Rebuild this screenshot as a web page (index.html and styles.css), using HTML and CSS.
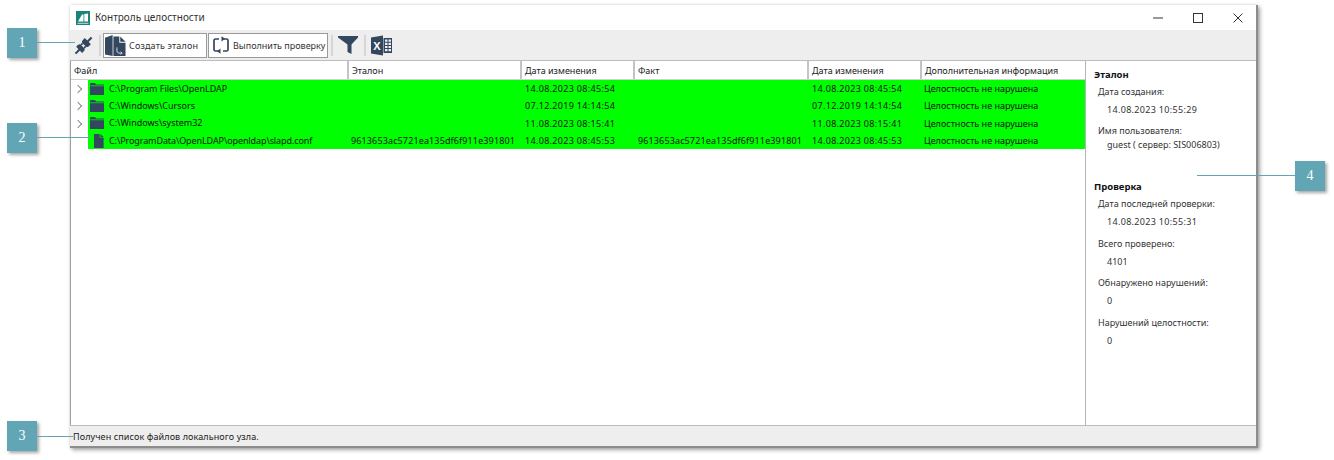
FILE: index.html
```html
<!DOCTYPE html>
<html lang="ru">
<head>
<meta charset="utf-8">
<title>Контроль целостности</title>
<link rel="stylesheet" href="styles.css">
</head>
<body>
<svg class="defs" width="0" height="0" aria-hidden="true">
  <symbol id="folder" viewBox="0 0 14 12"><path d="M0 1.2C0 .5.5 0 1.2 0h3.600l1.400 1.600H14V2.600H0z" fill="#33475f"/><path d="M0 3.200h14V12H0z" fill="#33475f"/></symbol>
  <symbol id="file" viewBox="0 0 11 14"><path d="M1 0h5.600v3.600H10.600V14H1z" fill="#33475f"/><path d="M7.400 0l3.200 3H7.400z" fill="#33475f"/></symbol>
</svg>
<main class="window">
  <header class="titlebar">
    <svg class="app-icon" viewBox="0 0 14 14"><rect width="14" height="14" fill="#1b8378"/><path d="M2 10.500L6 3.500h1.500v7zM8.300 10.500V3l3.700-.5v8z" fill="#fff"/><rect x="1.500" y="11.800" width="11" height="1" fill="#bfe0dc"/></svg>
    <span class="title">Контроль целостности</span>
    <div class="win-controls">
      <svg viewBox="0 0 10 10" class="win-btn"><path d="M0 5h10" stroke="#333" fill="none"/></svg>
      <svg viewBox="0 0 10 10" class="win-btn"><rect x=".5" y=".5" width="9" height="9" stroke="#333" fill="none"/></svg>
      <svg viewBox="0 0 10 10" class="win-btn"><path d="M.5.5l9 9M9.500.5l-9 9" stroke="#333" fill="none"/></svg>
    </div>
  </header>
  <div class="toolbar">
    <svg class="tool-plug" viewBox="0 0 20 20"><g fill="#33475f" transform="rotate(45 10 10)"><rect x="9" y="-2" width="2.200" height="6"/><path d="M5.500 3.500h9v3.500c0 1-1 2-2 2h-5c-1 0-2-1-2-2z"/><rect x="6.800" y="9" width="1.800" height="2.500"/><rect x="11.400" y="9" width="1.800" height="2.500"/><path d="M7.500 11.500h5c1 0 2 1 2 2v3h-9v-3c0-1 1-2 2-2z"/><rect x="9" y="16" width="2.200" height="6"/></g></svg>
    <span class="tool-sep"></span>
    <button class="tool-btn btn-create" type="button">
      <svg class="btn-icon" viewBox="0 0 22 22"><path d="M0 3l8-3v22L0 20.500z" fill="#33475f"/><path d="M8.800 1.500H15V8h6.500v14H8.800z" fill="#33475f"/><path d="M16 1.500l5.500 5.500H16z" fill="#33475f"/><path d="M12.500 13v4.500l2 1.500h3" fill="none" stroke="#dfe4ea"/><path d="M16.500 17.500l1.500 1.500-1.500 1.500" fill="none" stroke="#dfe4ea"/></svg>
      <span>Создать эталон</span>
    </button>
    <button class="tool-btn btn-check" type="button">
      <svg class="btn-icon-sm" viewBox="0 0 18 18"><path d="M7 3H3.500Q2 3 2 4.500v9Q2 15 3.500 15H8M11 15h3.500q1.500 0 1.500-1.500v-9Q16 3 14.500 3H10" fill="none" stroke="#33475f" stroke-width="1.700"/><path d="M9.500 .2v5.200L13 2.800zM8.500 12.600v5.200L5 15.200z" fill="#33475f"/></svg>
      <span>Выполнить проверку</span>
    </button>
    <span class="tool-sep sep-a"></span>
    <svg class="tool-funnel" viewBox="0 0 20 18"><path d="M0 0h20v1.500l-6.500 7V18l-4-2V8.500L0 1.500z" fill="#33475f"/></svg>
    <span class="tool-sep sep-b"></span>
    <svg class="tool-excel" viewBox="0 0 21 21"><path d="M0 2.500L12 .5v20L0 18.500z" fill="#33475f"/><path d="M12.500 3H21v15h-8.500zM14 4.500v2.200h2.500V4.500zm3.500 0v2.200H20V4.500zM14 7.700v2.200h2.500V7.700zm3.500 0v2.200H20V7.700zM14 10.900v2.200h2.500v-2.200zm3.500 0v2.200H20v-2.200zM14 14.100v2.200h2.500v-2.200zm3.500 0v2.200H20v-2.200z" fill="#33475f" fill-rule="evenodd"/><text x="6" y="14.500" class="excel-x">X</text></svg>
  </div>
  <div class="content">
    <section class="table">
      <div class="thead">
        <div class="th c1">Файл</div>
        <div class="th c2">Эталон</div>
        <div class="th c3">Дата изменения</div>
        <div class="th c4">Факт</div>
        <div class="th c5">Дата изменения</div>
        <div class="th c6">Дополнительная информация</div>
      </div>
      <div class="row">
        <span class="arrow"></span>
        <div class="cells">
          <div class="td d1"><svg class="i-folder"><use href="#folder"/></svg>C:\Program Files\OpenLDAP</div>
          <div class="td d2"></div>
          <div class="td d3 date">14.08.2023 08:45:54</div>
          <div class="td d4"></div>
          <div class="td d5 date">14.08.2023 08:45:54</div>
          <div class="td d6">Целостность не нарушена</div>
        </div>
      </div>
      <div class="row">
        <span class="arrow"></span>
        <div class="cells">
          <div class="td d1"><svg class="i-folder"><use href="#folder"/></svg>C:\Windows\Cursors</div>
          <div class="td d2"></div>
          <div class="td d3 date">07.12.2019 14:14:54</div>
          <div class="td d4"></div>
          <div class="td d5 date">07.12.2019 14:14:54</div>
          <div class="td d6">Целостность не нарушена</div>
        </div>
      </div>
      <div class="row">
        <span class="arrow"></span>
        <div class="cells">
          <div class="td d1"><svg class="i-folder"><use href="#folder"/></svg>C:\Windows\system32</div>
          <div class="td d2"></div>
          <div class="td d3 date">11.08.2023 08:15:41</div>
          <div class="td d4"></div>
          <div class="td d5 date">11.08.2023 08:15:41</div>
          <div class="td d6">Целостность не нарушена</div>
        </div>
      </div>
      <div class="row">
        <span class="arrow none"></span>
        <div class="cells">
          <div class="td d1 path"><svg class="i-file"><use href="#file"/></svg>C:\ProgramData\OpenLDAP\openldap\slapd.conf</div>
          <div class="td d2 hash">9613653ac5721ea135df6f911e391801</div>
          <div class="td d3 date">14.08.2023 08:45:53</div>
          <div class="td d4 hash">9613653ac5721ea135df6f911e391801</div>
          <div class="td d5 date">14.08.2023 08:45:53</div>
          <div class="td d6">Целостность не нарушена</div>
        </div>
      </div>
    </section>
    <aside class="side">
      <h3 class="side-h">Эталон</h3>
      <div class="side-l">Дата создания:</div>
      <div class="side-v date">14.08.2023 10:55:29</div>
      <div class="side-l l-user">Имя пользователя:</div>
      <div class="side-v v-user">guest ( сервер: SIS006803)</div>
      <h3 class="side-h h-check">Проверка</h3>
      <div class="side-l">Дата последней проверки:</div>
      <div class="side-v date">14.08.2023 10:55:31</div>
      <div class="side-l">Всего проверено:</div>
      <div class="side-v">4101</div>
      <div class="side-l">Обнаружено нарушений:</div>
      <div class="side-v">0</div>
      <div class="side-l">Нарушений целостности:</div>
      <div class="side-v">0</div>
    </aside>
  </div>
  <footer class="status">Получен список файлов локального узла.</footer>
</main>

<div class="callout co1">1</div><div class="leader ld1"></div>
<div class="callout co2">2</div><div class="leader ld2"></div>
<div class="callout co3">3</div><div class="leader ld3"></div>
<div class="callout co4">4</div><div class="leader ld4"></div>
</body>
</html>
```
FILE: styles.css
```css
* { box-sizing: border-box; }
html, body { margin: 0; height: 460px; overflow: hidden; background: #fff; }
body { position: relative; padding: 5px 0 0 70px; font-family: "Noto Sans", "Open Sans", sans-serif; font-size: 9px; color: #222; }
.defs { position: absolute; }
.window { width: 1188px; height: 443px; display: flex; flex-direction: column; background: #fff; border-right: 2px solid #8c8c8c; border-bottom: 2px solid #8c8c8c; box-shadow: 2px 2px 4px rgba(0,0,0,.35), 0 0 3px rgba(0,0,0,.12); }
.titlebar { height: 25px; display: flex; align-items: center; padding-left: 6px; background: #fff; }
.app-icon { width: 14px; height: 14px; }
.title { margin-left: 5px; font-size: 10px; color: #333; position: relative; top: -1px; }
.win-controls { margin-left: auto; display: flex; gap: 30px; padding-right: 13px; }
.win-btn { width: 10px; height: 10px; display: block; }
.toolbar { height: 30px; display: flex; align-items: center; background: #eee; padding-left: 4px; }
.tool-plug { width: 19px; height: 19px; }
.tool-sep { width: 2px; height: 21px; background: #d6d6d6; margin-left: 6px; }
.tool-btn { height: 25px; display: flex; align-items: center; background: #fff; border: 1px solid #9a9a9a; padding: 0; font: inherit; color: #333; white-space: nowrap; overflow: hidden; }
.btn-create { width: 104px; margin-left: 2px; padding-left: 1px; gap: 3px; letter-spacing: .15px; }
.btn-check { width: 120px; margin-left: 1px; padding-left: 3px; gap: 3px; }
.btn-icon { width: 21px; height: 21px; flex: none; }
.btn-icon-sm { width: 18px; height: 18px; flex: none; }
.sep-a { margin-left: 3px; }
.tool-funnel { width: 20px; height: 18px; margin-left: 5px; }
.sep-b { margin-left: 6px; }
.tool-excel { width: 21px; height: 21px; margin-left: 5px; }
.excel-x { font: bold 11px "Liberation Sans", sans-serif; fill: #fff; text-anchor: middle; }
.content { flex: 1; display: flex; min-height: 0; border-top: 1px solid #bcbcbc; }
.table { width: 1016px; border-left: 1px solid #a0a0a0; border-right: 1px solid #b5b5b5; overflow: hidden; }
.thead { display: flex; height: 19px; border-bottom: 1px solid #d0d0d0; }
.th { padding: 3px 0 0 3px; border-right: 2px solid #c4c4c4; white-space: nowrap; }
.c1 { width: 278px; }
.c2 { width: 173px; }
.c3 { width: 113px; }
.c4 { width: 174px; }
.c5 { width: 113px; }
.c6 { flex: 1; border-right: 0; }
.row { display: flex; height: 17.3px; }
.arrow { width: 17px; flex: none; position: relative; }
.arrow::before { content: ""; position: absolute; left: 4px; top: 6px; width: 5px; height: 5px; border-top: 1px solid #8a8a8a; border-right: 1px solid #8a8a8a; transform: rotate(45deg); }
.arrow.none::before { display: none; }
.cells { flex: 1; display: flex; background: #00ff00; color: #111; line-height: 18px; }
.td { white-space: nowrap; padding-left: 3px; overflow: hidden; }
.d1 { width: 261px; padding-left: 2px; display: flex; align-items: center; }
.d2 { width: 173px; padding-left: 2px; }
.d3 { width: 113px; }
.d4 { width: 174px; }
.d5 { width: 113px; }
.d6 { flex: 1; padding-left: 2px; }
.date { letter-spacing: .32px; }
.hash { letter-spacing: .13px; }
.path { letter-spacing: -.1px; }
.i-folder { width: 14px; height: 12px; margin-right: 5px; flex: none; }
.i-file { width: 11px; height: 14px; margin: 0 5px 0 3px; flex: none; }
.side { flex: 1; padding: 8px 8px 0 8px; color: #333; }
.side-h { margin: 0; font-size: 9.500px; font-weight: 700; color: #111; line-height: 12px; }
.side-l { padding-left: 4px; margin-top: 6px; line-height: 13px; }
.side-v { padding-left: 13px; margin-top: 5px; line-height: 14px; }
.side-v + .side-l { margin-top: 7.400px; }
.side-h + .side-l { margin-top: 4px; }
.side-v.v-user { margin-top: 1px; }
.h-check { margin-top: 29px; }
.status { height: 21px; background: #eee; border-top: 1px solid #bcbcbc; padding: 4px 0 0 3px; line-height: 14px; letter-spacing: .1px; }
.callout { position: absolute; width: 30px; height: 30px; background: #62a5b5; color: #fff; font-size: 14px; display: flex; align-items: center; justify-content: center; box-shadow: 2px 2px 3px rgba(0,0,0,.35); font-family: "Liberation Serif", serif; }
.co1 { left: 7px; top: 28px; }
.co2 { left: 7px; top: 123px; }
.co3 { left: 7px; top: 421px; }
.co4 { left: 1295px; top: 161px; }
.leader { position: absolute; height: 1px; background: #62a5b5; }
.ld1 { left: 37px; top: 42px; width: 38px; }
.ld2 { left: 37px; top: 137px; width: 53px; }
.ld3 { left: 37px; top: 436px; width: 36px; }
.ld4 { left: 1197px; top: 175px; width: 98px; }
```
